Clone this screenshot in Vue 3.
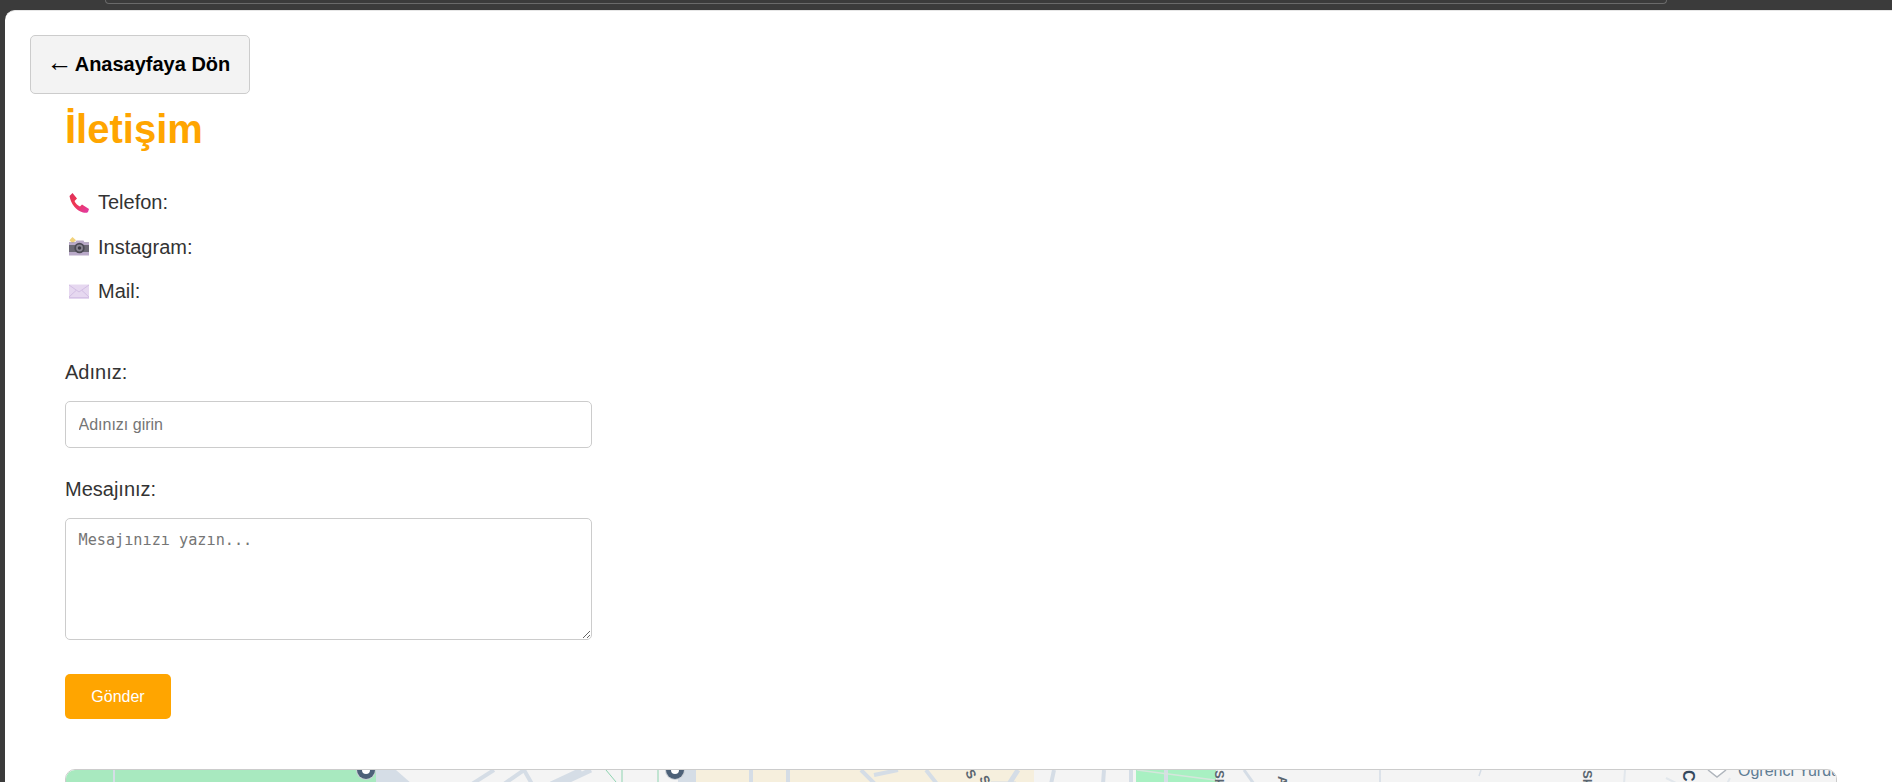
<template>
  <div class="chrome">
    <div class="address-edge"></div>
  </div>
  <main class="page">
    <button class="back-btn" type="button"><span class="arrow">←</span>Anasayfaya Dön</button>

    <section class="content">
      <h1>İletişim</h1>

      <ul class="contact-list">
        <li>
          <svg class="emoji" viewBox="0 0 20 20">
            <defs>
              <linearGradient id="phoneGrad" x1="0" y1="0" x2="1" y2="1">
                <stop offset="0" stop-color="#d8305f" />
                <stop offset=".4" stop-color="#f0364f" />
                <stop offset="1" stop-color="#e03aa8" />
              </linearGradient>
            </defs>
            <path fill="url(#phoneGrad)" d="M.5 3 3.500 0 8 5.500 5.500 8c1 2.500 3 4.500 5.500 5.500l2-2 7 4.500-1 3c-1 1-3 1-5 .5C7 17.500 2 11 .5 3Z" />
          </svg>
          <span>Telefon:</span>
        </li>
        <li>
          <svg class="emoji" viewBox="0 0 20 20">
            <path fill="#f2d27a" d="M3.500 0 7 3.200 3.500 6.400.5 3.200Z" />
            <path fill="#6b6874" d="M0 5.500h20V17H0Z" />
            <path fill="#b9a9c8" d="M0 5.500h6l1.500-2h7l1 2H20V8H0ZM0 15h20v3.500H0Z" />
            <circle cx="10.500" cy="11" r="5.200" fill="#4c4a55" />
            <circle cx="10.500" cy="11" r="3.400" fill="#8b8794" />
            <circle cx="10.500" cy="11" r="1.800" fill="#3d3b45" />
          </svg>
          <span>Instagram:</span>
        </li>
        <li>
          <svg class="emoji" viewBox="0 0 20 20">
            <path fill="#e6d8f0" d="M0 2.500h20v14H0Z" />
            <path fill="#d5c2e6" d="M0 15h20v1.500H0Z" />
            <path fill="none" stroke="#cdb8e0" stroke-width=".8" d="M0 3l10 7 10-7M0 15l7-6.500M20 15l-7-6.500" />
          </svg>
          <span>Mail:</span>
        </li>
      </ul>

      <form class="contact-form" @submit.prevent>
        <label for="name">Adınız:</label>
        <input id="name" type="text" placeholder="Adınızı girin" />

        <label for="message">Mesajınız:</label>
        <textarea id="message" placeholder="Mesajınızı yazın..."></textarea>

        <button class="send-btn" type="submit">Gönder</button>
      </form>

      <div class="map">
        <svg viewBox="0 0 1772 40" width="1772" height="40">
          <rect width="1772" height="40" fill="#f4f4f4" />
          <rect width="310" height="40" fill="#a8e9bf" />
          <path d="M310 0h20l16 14h-36Z" fill="#d5dde6" />
          <rect x="612" width="18" height="40" fill="#d5dde6" />
          <rect x="630" width="338" height="40" fill="#f6efdd" />
          <rect x="1070" width="80" height="40" fill="#a8f0c2" />
          <g fill="none" stroke="#d5dde6" stroke-width="4">
            <path d="M48 0v14" stroke-width="2" />
            <path d="M428 0 406 14M438 14 458 0l8 14" />
            <path d="M515 0 485 14M525 0 495 14" stroke-width="5" />
            <path d="M685 0v14M722 0v14" />
            <path d="M808 5 832 0M795 0l14 14M860 0l11 14" />
            <path d="M952 0l-9 14M925 14h25" stroke-width="5" />
            <path d="M988 0l-3 14M1038 0l-1 14M1065 0v14M1100 0v14" />
            <path d="M1178 0l10 14" stroke-width="3" />
            <path d="M1314 0v14M1415 0l-2 6" stroke-width="1.500" />
            <path d="M1559 0l-1 14M1600 8l12 6M1664 8l-3 6" stroke-width="2" stroke="#e2e7ec" />
          </g>
          <path d="M1071 0l78 10" stroke="#d5e5dc" stroke-width="1.500" fill="none" />
          <path d="M540 0l10 12M556 0v14M592 0v14" stroke="#8ed4b0" stroke-width="1" fill="none" />
          <circle cx="300" cy="0" r="10" fill="#c9ced4" />
          <circle cx="300" cy="0" r="9" fill="#4d6178" />
          <circle cx="300" cy="0" r="4" fill="#fff" />
          <circle cx="609" cy="0" r="10" fill="#c9ced4" />
          <circle cx="609" cy="0" r="9" fill="#4d6178" />
          <circle cx="609" cy="0" r="4" fill="#fff" />
          <text class="map-label" x="899" y="2" transform="rotate(65 899 2)">S</text>
          <text class="map-label" x="913" y="8" transform="rotate(65 913 8)">S</text>
          <text class="map-label" x="1149" y="0" transform="rotate(90 1149 0)">Sk</text>
          <text class="map-label" x="1212" y="6" transform="rotate(90 1212 6)">A</text>
          <text class="map-label" x="1517" y="0" transform="rotate(90 1517 0)">Sk</text>
          <text class="map-label dark" x="1617" y="0" transform="rotate(90 1617 0)">C</text>
          <path d="M1642 0l9 7 9-7" fill="#fff" stroke="#b0b6bd" stroke-width="1.500" />
          <text class="map-place" x="1672" y="6">Öğrenci Yurdu</text>
        </svg>
      </div>
    </section>
  </main>
</template>

<script setup>
</script>

<style>
html,
body {
  margin: 0;
  height: 100%;
  overflow: hidden;
  background: #3b3b3b;
}
</style>

<style scoped>
.chrome {
  height: 10px;
  background: #3b3b3b;
}

.address-edge {
  height: 3px;
  margin-left: 105px;
  width: 1560px;
  border: 1px solid #6a6a6a;
  border-top: 0;
  border-radius: 0 0 12px 12px;
}

.page {
  margin-left: 5px;
  height: 772px;
  padding: 24px 0 0 25px;
  box-sizing: border-box;
  background: #fff;
  border-top: 1px solid #e6e6e6;
  border-top-left-radius: 10px;
  font-family: "Liberation Sans", Arial, sans-serif;
  color: #333;
  overflow: hidden;
}

.back-btn {
  display: block;
  width: 220px;
  height: 59px;
  padding: 0 3px 0 0;
  background: #f3f3f3;
  border: 1px solid #ccc;
  border-radius: 5px;
  color: #000;
  font-family: "Liberation Sans", Arial, sans-serif;
  font-size: 20px;
  font-weight: 700;
}

.arrow {
  margin-right: 2px;
  font-size: 26px;
  line-height: 20px;
  font-weight: 400;
  font-family: "Liberation Serif", serif;
}

.content {
  width: 1772px;
  margin-left: 35px;
}

h1 {
  margin: 12px 0 0;
  font-size: 40px;
  line-height: 46px;
  font-weight: 700;
  color: #ffa500;
}

.contact-list {
  list-style: none;
  margin: 39px 0 0;
  padding: 0;
}

.contact-list li {
  display: flex;
  align-items: center;
  height: 23px;
  margin-bottom: 21.5px;
  padding-left: 4px;
  font-size: 20px;
}

.emoji {
  width: 20px;
  height: 20px;
  margin-right: 9px;
  flex: none;
}

.contact-form {
  display: flex;
  flex-direction: column;
  align-items: flex-start;
  margin-top: 58px;
}

label {
  font-size: 20px;
  line-height: 23px;
  margin-bottom: 17px;
}

input,
textarea {
  display: block;
  width: 527px;
  box-sizing: border-box;
  border: 1px solid #ccc;
  border-radius: 5px;
  padding: 12px 12.5px;
  font-size: 16px;
  color: #333;
  background: #fff;
}

input {
  height: 47px;
  margin-bottom: 30px;
  font-family: "Liberation Sans", Arial, sans-serif;
}

textarea {
  height: 122px;
  margin-bottom: 34px;
  font-family: "DejaVu Sans Mono", monospace;
  font-size: 15.2px;
}

input::placeholder,
textarea::placeholder {
  color: #757575;
}

.send-btn {
  width: 106px;
  height: 45px;
  border: 0;
  border-radius: 5px;
  background: #ffa500;
  color: #fff;
  font-family: "Liberation Sans", Arial, sans-serif;
  font-size: 16px;
}

.map {
  height: 300px;
  margin-top: 50px;
  border: 1px solid #ccc;
  border-radius: 10px;
  overflow: hidden;
  box-sizing: border-box;
}

.map svg {
  display: block;
}

.map-label {
  font-size: 13px;
  font-weight: 700;
  fill: #5a6670;
}

.map-label.dark {
  fill: #34495e;
  font-size: 16px;
}

.map-place {
  font-size: 16px;
  fill: #5f7d95;
}
</style>
